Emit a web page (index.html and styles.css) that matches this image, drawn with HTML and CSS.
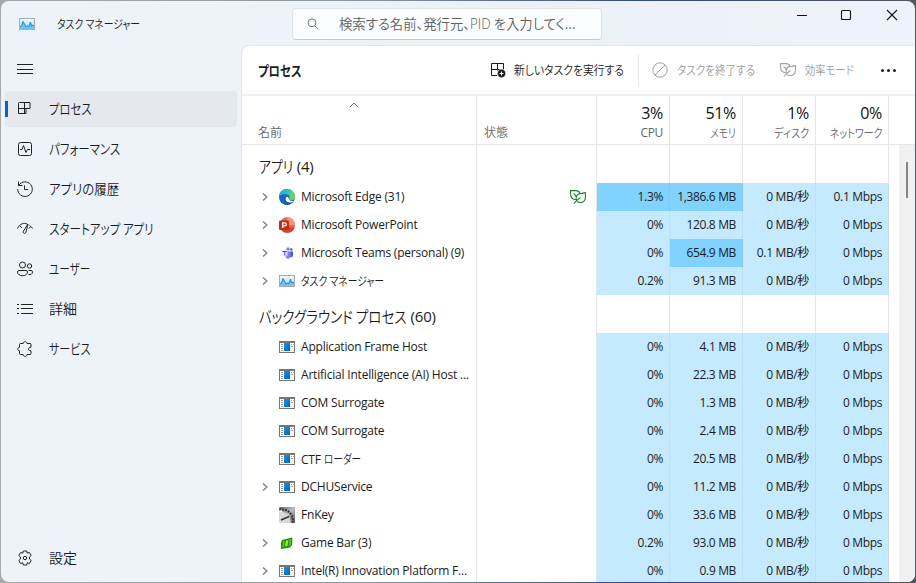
FILE: index.html
```
<!DOCTYPE html>
<html lang="ja">
<head>
  <meta charset="UTF-8" />
  <meta name="viewport" content="width=device-width, initial-scale=1" />
  <title>タスク マネージャー</title>
  <link rel="stylesheet" href="styles.css">
</head>
<body>
  <!-- Shared icons -->
  <svg class="defs">
    <linearGradient id="sky" x2="0" y2="1"><stop stop-color="#f4f8fb"/><stop offset="1" stop-color="#a9dcfb"/></linearGradient>
    <linearGradient id="edge-g" x1="0" y1="0" x2="1" y2=".3"><stop stop-color="#1b9de2"/><stop offset=".55" stop-color="#2fc2c0"/><stop offset="1" stop-color="#6bd84f"/></linearGradient>
    <linearGradient id="edge-b" x2="0" y2="1"><stop stop-color="#1b8fdc"/><stop offset="1" stop-color="#12479c"/></linearGradient>
    <linearGradient id="blue" x2="1" y2="1"><stop stop-color="#1f93e0"/><stop offset="1" stop-color="#0062b8"/></linearGradient>
    <linearGradient id="dial" x2="1" y2="1"><stop stop-color="#666"/><stop offset=".5" stop-color="#bbb"/><stop offset="1" stop-color="#555"/></linearGradient>
    <symbol id="i-taskmgr" viewBox="0 0 16 12">
      <rect x=".5" y=".5" width="15" height="11" fill="url(#sky)" stroke="#a3adb5"/>
      <path d="M1 9l1.500-1L4 3.500 6 7l1 2 1.500-1 1.500.5L11.500 4l1 4L14 7l1 1v3H1z" fill="#72c3f5"/>
      <path d="M1 9l1.500-1L4 3.500 6 7l1 2 1.500-1 1.500.5L11.500 4l1 4L14 7l1 1" fill="none" stroke="#1686d4"/>
    </symbol>
    <symbol id="i-app" viewBox="0 0 16 12">
      <path d="M0 0h16v12H0z" fill="#777"/>
      <path d="M1 2h14v9H1z" fill="#fff"/>
      <path d="M5 2h6v8H5z" fill="url(#blue)"/>
      <path d="M2 3.500h2M2 5.500h2M2 7.500h2M2 9.500h2M12 3.500h1M14 3.500h.7M12 5.500h2" stroke="#999"/>
    </symbol>
    <symbol id="i-leaf" viewBox="0 0 16 14">
      <path d="M6 9.500C2.800 9.500.6 7.500.6 4V.6h5.200c2 0 3.500.8 4 2.400M7 11.300C5 8.500 6.500 3.500 10.500 3.500c2 0 3-.5 4.900-1V7.500c0 3-2 5-5 5-1.500 0-2.600-.4-3.400-1.200M4 13.500c1.500-2.300 3.500-4 6.500-6M3.500 3.500C5 4.500 5.800 5.500 6.200 7" fill="none" stroke="currentColor" stroke-width="1.100"/>
    </symbol>
    <symbol id="i-chev" viewBox="0 0 6 8">
      <path d="M1 .5L4.800 4 1 7.500" fill="none" stroke="#858585" stroke-width="1.500"/>
    </symbol>
    <symbol id="i-edge" viewBox="0 0 16 16">
      <circle cx="8" cy="8" r="8" fill="url(#edge-b)"/>
      <path d="M0 8a8 8 0 0 1 16 0c0 2.300-1.700 3.300-3.500 3.300-2 0-3-.8-2.800-1.500.2-.6.8-.9.8-2C10.500 6 8.500 5 6.500 5 3.500 5 .5 6 0 8z" fill="url(#edge-g)"/>
      <path d="M9.700 9.800c-.2-1.600-1.300-2.200-2.500-1.300-1 1-.7 3 .8 4.200 2 1.300 5 1 6.800-.8-2 .3-5.200-.2-5.100-2.100z" fill="#fff"/>
      <path d="M1.500 12.500C0 9 2 6 6 5.800 4 7.500 4 12 8.500 14.700c-3 .8-5.500-.2-7-2.200z" fill="#1569bd"/>
    </symbol>
    <symbol id="i-ppt" viewBox="0 0 16 16">
      <circle cx="8.300" cy="8" r="7.700" fill="#e8654a"/>
      <path d="M8.300.3A7.700 7.700 0 0 1 16 8H8.300z" fill="#ff9274"/>
      <path d="M1 10.500h14.600a7.700 7.700 0 0 1-14.600 0z" fill="#d04526"/>
      <rect y="3.500" width="10" height="9.500" rx="1" fill="#b7341a"/>
      <path d="M3.700 11V5.800h1.800c2.400 0 2.400 3.100 0 3.100H3.700" fill="none" stroke="#fff" stroke-width="1.300"/>
    </symbol>
    <symbol id="i-teams" viewBox="0 0 16 16">
      <circle cx="9" cy="4" r="1.700" fill="#7b83eb"/><circle cx="12.300" cy="4.500" r="1.200" fill="#5059c9"/>
      <path d="M10.500 6.500H14V10c0 2-1.500 2.500-3 2z" fill="#5059c9"/>
      <path d="M6.500 6.500h5V11c0 3.500-5 3.500-5 0z" fill="#7b83eb"/>
      <path d="M3.500 5.500h5v5h-5z" fill="#dfe1fa"/>
      <path d="M3.500 6.500h4.500M5.800 6.500V10.500" stroke="#4b53bc"/>
    </symbol>
    <symbol id="i-dial" viewBox="0 0 16 16">
      <path d="M0 0h16v16h-4z" fill="url(#dial)"/>
      <path d="M0 2.500c9-1 14 4 14 13" fill="none" stroke="#333" stroke-width="2" stroke-dasharray="2 1"/>
      <path d="M0 4.500c7 0 11.500 4 11.500 11.500H0z" fill="#d8d8d8"/>
      <path d="M2 13l8-3.500" stroke="#333" stroke-width="1.500"/>
    </symbol>
    <symbol id="i-game" viewBox="0 0 16 16">
      <path d="M3 5L13.500 2.500 13 10l-2 2.500-9 1.500L2 8z" fill="#168a12"/>
      <path d="M4 6l8.500-2-1 6.500L3 12.500z" fill="#5ccc13"/>
      <path d="M6.500 6.200l2.800-.6-.8 5-2.700.5z" fill="#a0ec28"/>
      <path d="M6.500 5L5.300 12.500M10 4.500L9 11.500" stroke="#13820f" stroke-width=".8"/>
    </symbol>
  </svg>

  <div class="window">
    <header class="titlebar">
      <div class="brand">
        <svg class="brand-icon"><use href="#i-taskmgr"/></svg>
        <span class="jp n-title">タスク マネージャー</span>
      </div>
      <div class="search">
        <svg viewBox="0 0 12 12"><circle cx="5" cy="4.800" r="3.900"/><path d="M7.800 7.700l3.500 3.500"/></svg>
        <span class="jp n-search">検索する名前、発行元、<span class="latin">PID</span> を入力してく...</span>
      </div>
      <div class="controls">
        <svg viewBox="0 0 12 12"><path d="M1 6.500h10"/></svg>
        <svg viewBox="0 0 12 12"><rect x="1.500" y="1.500" width="9" height="9" rx="1"/></svg>
        <svg viewBox="0 0 12 12"><path d="M1 1l10 10M11 1L1 11"/></svg>
      </div>
    </header>

    <div class="content">
      <nav class="sidebar">
        <div class="item menu"><svg viewBox="0 0 16 16"><path d="M0 3.500h16M0 8.500h16M0 12.500h16"/></svg></div>
        <div class="item active">
          <svg viewBox="0 0 16 16"><path d="M2.500 1.500h10.500v6H9v5H1.500v-10q0-1 1-1zM7.500 1.500v11M1.500 7.500h8"/></svg>
          <span class="jp n-80">プロセス</span>
        </div>
        <div class="item">
          <svg viewBox="0 0 16 16"><rect x="1.500" y="1.500" width="13" height="13" rx="2"/><path d="M3 8.500h2l1.500-4 2.500 7 1.500-3H13"/></svg>
          <span class="jp n-perf">パフォーマンス</span>
        </div>
        <div class="item">
          <svg viewBox="0 0 16 16"><path d="M1.500.5v4h4M1.800 4.300A7.300 7.300 0 1 1 .7 8M7.500 4.500v4H11"/></svg>
          <span class="jp n-hist">アプリの履歴</span>
        </div>
        <div class="item">
          <svg viewBox="0 0 16 16"><path d="M.5 7.500C3 2.500 7 1.500 10 3M12.500 4.500c1.500.8 2.300 1.800 3 3M3 5l2 2M13.500 5.500L12 7.500M11 3L6.500 10c-1 2.500 1.500 3.300 2.500 1L11 3"/></svg>
          <span class="jp n-start">スタートアップ アプリ</span>
        </div>
        <div class="item">
          <svg viewBox="0 0 16 16"><circle cx="5.500" cy="4" r="3"/><circle cx="12.500" cy="5" r="2.200"/><path d="M2 9.500h7q1.500 0 1.500 1.500c0 5-10 5-10 0Q.5 9.500 2 9.500zM11.500 9.500H14q1.500 0 1.500 1.300c0 2.500-2 3.200-4 2.700"/></svg>
          <span class="jp n-user">ユーザー</span>
        </div>
        <div class="item">
          <svg viewBox="0 0 16 16"><path d="M0 3.500h2M0 7.500h2M0 12.500h2M4 3.500h12M4 7.500h12M4 12.500h12"/></svg>
          <span class="jp">詳細</span>
        </div>
        <div class="item">
          <svg viewBox="0 0 16 16"><path d="M3.500 2.500h2.700c.2-2.500 3.600-2.500 3.800 0h3q1 0 1 1v2.700c-3.300 0-3.300 3.600 0 3.600v2.700q0 1-1 1h-3c-.2 2.500-3.600 2.500-3.800 0H3.500q-1 0-1-1V9.800c-2.300 0-2.300-3.600 0-3.600V3.500q0-1 1-1z"/></svg>
          <span class="jp n-svc">サービス</span>
        </div>
        <div class="item settings">
          <svg viewBox="0 0 16 16"><path d="M6.300 1h3.400l.5 2.200 2.200-.7 1.800 3L12.500 7v2l1.700 1.500-1.800 3-2.200-.7-.5 2.200H6.300l-.5-2.200-2.200.7-1.800-3L3.500 9V7L1.800 5.500l1.800-3 2.200.7z"/><circle cx="8" cy="8" r="1.700"/></svg>
          <span class="jp">設定</span>
        </div>
      </nav>

      <main class="panel">
        <div class="toolbar">
          <h1><span class="jp n-head">プロセス</span></h1>
          <button class="tool run">
            <svg viewBox="0 0 16 16"><path d="M7 13.500H1.500v-12h12V7M7.500 1.500v7M1.500 7.500h12"/><circle cx="11.500" cy="11.500" r="4.200" class="solid"/><path d="M9.500 11.500h4M11.500 9.500v4" class="plus"/></svg>
            <span class="jp n-run">新しいタスクを実行する</span>
          </button>
          <button class="tool end" disabled>
            <svg viewBox="0 0 16 16"><circle cx="8" cy="8" r="7.200"/><path d="M3 13L13 3"/></svg>
            <span class="jp n-end">タスクを終了する</span>
          </button>
          <button class="tool eco" disabled>
            <svg viewBox="0 0 16 14"><use href="#i-leaf"/></svg>
            <span class="jp n-eco">効率モード</span>
          </button>
          <button class="tool more"><i></i><i></i><i></i></button>
        </div>

        <div class="row head">
          <div class="name"><svg class="sort" viewBox="0 0 10 6"><path d="M1 5l4-4 4 4"/></svg><span class="jp">名前</span></div>
          <div class="status"><span class="jp">状態</span></div>
          <div class="num"><b>3%</b><span>CPU</span></div>
          <div class="num"><b>51%</b><span class="jp n-mem">メモリ</span></div>
          <div class="num"><b>1%</b><span class="jp n-disk">ディスク</span></div>
          <div class="num"><b>0%</b><span class="jp n-net">ネットワーク</span></div>
        </div>

        <div class="body">
          <div class="rows">
            <div class="row group"><div class="name"><span class="jp n-g1">アプリ</span><span class="count c1">(4)</span></div><div class="status"></div><div class="num"></div><div class="num"></div><div class="num"></div><div class="num"></div></div>
            <div class="row"><div class="name"><svg class="chev"><use href="#i-chev"/></svg><svg class="ico"><use href="#i-edge"/></svg><span>Microsoft Edge (31)</span></div><div class="status"><svg class="leaf"><use href="#i-leaf"/></svg></div><div class="num hot">1.3%</div><div class="num hot">1,386.6 MB</div><div class="num">0 MB/秒</div><div class="num">0.1 Mbps</div></div>
            <div class="row"><div class="name"><svg class="chev"><use href="#i-chev"/></svg><svg class="ico"><use href="#i-ppt"/></svg><span>Microsoft PowerPoint</span></div><div class="status"></div><div class="num">0%</div><div class="num">120.8 MB</div><div class="num">0 MB/秒</div><div class="num">0 Mbps</div></div>
            <div class="row"><div class="name"><svg class="chev"><use href="#i-chev"/></svg><svg class="ico"><use href="#i-teams"/></svg><span>Microsoft Teams (personal) (9)</span></div><div class="status"></div><div class="num">0%</div><div class="num hot">654.9 MB</div><div class="num">0.1 MB/秒</div><div class="num">0 Mbps</div></div>
            <div class="row"><div class="name"><svg class="chev"><use href="#i-chev"/></svg><svg class="ico"><use href="#i-taskmgr"/></svg><span class="jp n-title">タスク マネージャー</span></div><div class="status"></div><div class="num">0.2%</div><div class="num">91.3 MB</div><div class="num">0 MB/秒</div><div class="num">0 Mbps</div></div>

            <div class="row group"><div class="name"><span class="jp n-g2">バックグラウンド プロセス</span><span class="count c2">(60)</span></div><div class="status"></div><div class="num"></div><div class="num"></div><div class="num"></div><div class="num"></div></div>
            <div class="row"><div class="name"><i class="chev"></i><svg class="ico"><use href="#i-app"/></svg><span>Application Frame Host</span></div><div class="status"></div><div class="num">0%</div><div class="num">4.1 MB</div><div class="num">0 MB/秒</div><div class="num">0 Mbps</div></div>
            <div class="row"><div class="name"><i class="chev"></i><svg class="ico"><use href="#i-app"/></svg><span>Artificial Intelligence (AI) Host ...</span></div><div class="status"></div><div class="num">0%</div><div class="num">22.3 MB</div><div class="num">0 MB/秒</div><div class="num">0 Mbps</div></div>
            <div class="row"><div class="name"><i class="chev"></i><svg class="ico"><use href="#i-app"/></svg><span>COM Surrogate</span></div><div class="status"></div><div class="num">0%</div><div class="num">1.3 MB</div><div class="num">0 MB/秒</div><div class="num">0 Mbps</div></div>
            <div class="row"><div class="name"><i class="chev"></i><svg class="ico"><use href="#i-app"/></svg><span>COM Surrogate</span></div><div class="status"></div><div class="num">0%</div><div class="num">2.4 MB</div><div class="num">0 MB/秒</div><div class="num">0 Mbps</div></div>
            <div class="row"><div class="name"><i class="chev"></i><svg class="ico"><use href="#i-app"/></svg><span>CTF <span class="jp n-ctf">ローダー</span></span></div><div class="status"></div><div class="num">0%</div><div class="num">20.5 MB</div><div class="num">0 MB/秒</div><div class="num">0 Mbps</div></div>
            <div class="row"><div class="name"><svg class="chev"><use href="#i-chev"/></svg><svg class="ico"><use href="#i-app"/></svg><span>DCHUService</span></div><div class="status"></div><div class="num">0%</div><div class="num">11.2 MB</div><div class="num">0 MB/秒</div><div class="num">0 Mbps</div></div>
            <div class="row"><div class="name"><i class="chev"></i><svg class="ico"><use href="#i-dial"/></svg><span>FnKey</span></div><div class="status"></div><div class="num">0%</div><div class="num">33.6 MB</div><div class="num">0 MB/秒</div><div class="num">0 Mbps</div></div>
            <div class="row"><div class="name"><svg class="chev"><use href="#i-chev"/></svg><svg class="ico"><use href="#i-game"/></svg><span>Game Bar (3)</span></div><div class="status"></div><div class="num">0.2%</div><div class="num">93.0 MB</div><div class="num">0 MB/秒</div><div class="num">0 Mbps</div></div>
            <div class="row"><div class="name"><svg class="chev"><use href="#i-chev"/></svg><svg class="ico"><use href="#i-app"/></svg><span>Intel(R) Innovation Platform F...</span></div><div class="status"></div><div class="num">0%</div><div class="num">0.9 MB</div><div class="num">0 MB/秒</div><div class="num">0 Mbps</div></div>
          </div>
          <div class="scrollbar"><div class="thumb"></div></div>
        </div>
      </main>
    </div>
  </div>
</body>
</html>
```
FILE: styles.css
```
* {
  box-sizing: border-box;
}
body {
  margin: 0;
  height: 583px;
  overflow: hidden;
  padding: 1px 1px 1px 1px;
  background: linear-gradient(90deg, #a9a9ab 0, #8995a2 40%, #334b82 70%, #55565c 100%);
  font: 12px/16px "Open Sans", "Noto Sans CJK JP", sans-serif;
  color: #1b1b1b;
}
.defs {
  position: absolute;
  width: 0;
  height: 0;
}
.window {
  display: flex;
  flex-direction: column;
  height: 581px;
  border-radius: 8px;
  overflow: hidden;
  background: linear-gradient(90deg, #eef3f9, #edf3f8 30%, #ebf2f6 60%, #eff2fb);
}

/* Japanese UI text is set condensed */
.jp {
  display: inline-block;
  font-family: "Noto Sans CJK JP", sans-serif;
  font-feature-settings: "palt";
  font-weight: 350;
  letter-spacing: 0;
  white-space: nowrap;
  transform-origin: left;
}
.latin {
  font-family: "Open Sans", sans-serif;
}
.n-title { transform: scaleX(.82); }
.n-search { transform: scaleX(.955); }
.n-80 { transform: scaleX(.81); }
.n-perf { transform: scaleX(.82); }
.n-hist { transform: scaleX(.89); }
.n-start { transform: scaleX(.825); }
.n-user { transform: scaleX(.76); }
.n-svc { transform: scaleX(.79); }
.n-head { transform: scaleX(.81); }
.n-run { transform: scaleX(.9); }
.n-end { transform: scaleX(.88); }
.n-eco { transform: scaleX(.86); }
.n-g1 { transform: scaleX(.8); }
.n-g2 { transform: scaleX(.845); }
.n-ctf { transform: scaleX(.8); }
.n-mem { transform: scaleX(.8); }
.n-disk { transform: scaleX(.85); }
.n-net { transform: scaleX(.83); }

/* Title bar */
.titlebar {
  display: flex;
  height: 44px;
  flex: none;
}
.brand {
  display: flex;
  align-items: center;
  width: 291px;
  padding-left: 18px;
  gap: 22px;
  height: 46px;
}
.brand-icon {
  width: 16px;
  height: 12px;
}
.search {
  display: flex;
  align-items: center;
  width: 310px;
  height: 32px;
  margin-top: 7px;
  padding: 0 0 1px 14px;
  gap: 20px;
  border: 1px solid #dde3e8;
  border-bottom-color: #c5cacf;
  border-radius: 4px;
  background: #fafcfe;
  color: #5f6163;
  font-size: 14px;
}
.search svg {
  width: 12px;
  height: 12px;
  fill: none;
  stroke: #77797b;
  flex: none;
}
.controls {
  display: flex;
  gap: 33px;
  margin-left: auto;
  padding: 8px 17px 0 0;
}
.controls svg {
  width: 12px;
  height: 12px;
  fill: none;
  stroke: #111;
  stroke-width: 1.1;
}
.controls svg:nth-child(2) {
  margin: 0 1px 0 -1px;
}
.controls svg:first-child {
  margin-left: -1px;
}
.content {
  display: flex;
  flex: 1;
  min-height: 0;
}

/* Sidebar */
.sidebar {
  display: flex;
  flex-direction: column;
  width: 240px;
  padding: 6px 4px 6px;
  gap: 4px;
}
.item {
  display: flex;
  align-items: center;
  height: 36px;
  flex: none;
  padding-left: 12px;
  gap: 16px;
  border-radius: 4px;
  font-size: 14px;
}
.item svg {
  width: 16px;
  height: 16px;
  flex: none;
  fill: none;
  stroke: #222;
}
.item .jp {
  padding-bottom: 2px;
}
.active {
  background: linear-gradient(#0067c0, #0067c0) 0 10px / 3px 16px no-repeat #e5e8ed;
}
.settings {
  margin-top: auto;
}

/* Main panel */
.panel {
  display: flex;
  flex-direction: column;
  flex: 1;
  min-width: 0;
  background: #fff;
  border: 1px solid #e0e6eb;
  border-width: 1px 0 0 1px;
  border-radius: 8px 0 0 0;
}
.toolbar {
  display: flex;
  align-items: center;
  height: 50px;
  flex: none;
  padding-left: 16px;
  border-bottom: 2px solid #eeeff1;
}
h1 {
  width: 232px;
  margin: 0;
  font-size: 14px;
}
h1 .jp {
  font-weight: 700;
}
.tool {
  display: flex;
  align-items: center;
  gap: 8px;
  height: 32px;
  flex: none;
  padding: 0;
  border: 0;
  background: none;
  color: #1b1b1b;
  font: inherit;
}
.tool svg {
  width: 16px;
  height: 16px;
  flex: none;
  fill: none;
  stroke: currentColor;
}
.tool:disabled {
  color: #a0a0a0;
}
.tool .solid {
  fill: #1b1b1b;
  stroke: #fff;
  stroke-width: .6;
}
.tool .plus {
  stroke: #fff;
}
.run {
  width: 148px;
}
.end {
  width: 142px;
  padding-left: 13px;
  border-left: 1px solid #e8e8e8;
  gap: 9px;
}
.eco {
  width: 101px;
  gap: 9px;
}
.more {
  gap: 3px;
}
.more i {
  width: 3px;
  height: 3px;
  border-radius: 50%;
  background: #222;
}

/* Process table */
.row {
  display: grid;
  grid-template-columns: 235px 120px 73px 73px 73px 73px;
  width: 647px;
  height: 28px;
}
.row > div {
  display: flex;
  align-items: center;
  border-right: 1px solid #e5e5e5;
  white-space: nowrap;
}
.row .name {
  padding-left: 20px;
  letter-spacing: -.2px;
}
.row .num {
  justify-content: flex-end;
  padding-right: 6px;
  background: #c5eaff;
  border-color: #c2dff0;
  letter-spacing: -.35px;
}
.row .hot {
  background: #80d3ff;
  border-color: #85c9ed;
}
.row.head {
  width: auto;
  height: 49px;
  flex: none;
  border-bottom: 1px solid #e5e5e5;
  color: #666;
}
.row.head .name,
.row.head .status {
  align-items: flex-end;
  padding: 0 0 4px 16px;
}
.row.head .status {
  padding-left: 7px;
}
.sort {
  width: 10px;
  height: 6px;
  margin: 0 0 32px 67px;
  order: 1;
  fill: none;
  stroke: #777;
}
.row.head .num {
  flex-direction: column;
  align-items: flex-end;
  justify-content: flex-end;
  padding-bottom: 3px;
  gap: 2px;
  background: none;
  border-color: #e5e5e5;
}
.head b {
  font-size: 16px;
  line-height: 20px;
  font-weight: 400;
  color: #111;
}
.num .jp {
  transform-origin: right;
}
.body {
  display: flex;
  justify-content: space-between;
  flex: 1;
  min-height: 0;
  overflow: hidden;
}
.rows {
  overflow: hidden;
}
.row.group {
  height: 38px;
  font-size: 16px;
}
.row.group .name {
  padding: 4px 0 0 17px;
}
.row.group .num {
  background: none;
  border-color: #e5e5e5;
}
.count {
  font-size: 15px;
}
.c1 {
  margin-left: -5px;
}
.c2 {
  margin-left: -23px;
}
.chev {
  width: 6px;
  height: 8px;
  margin-right: 11px;
  flex: none;
}
.ico {
  width: 16px;
  height: 16px;
  margin-right: 6px;
  flex: none;
}
.status .leaf {
  width: 16px;
  height: 14px;
  margin-left: 93px;
  color: #1f7f2a;
}
.scrollbar {
  width: 16px;
  padding: 17px 0 0 7px;
  background: #f0f0f0;
}
.thumb {
  width: 2px;
  height: 36px;
  background: #858585;
}
```
